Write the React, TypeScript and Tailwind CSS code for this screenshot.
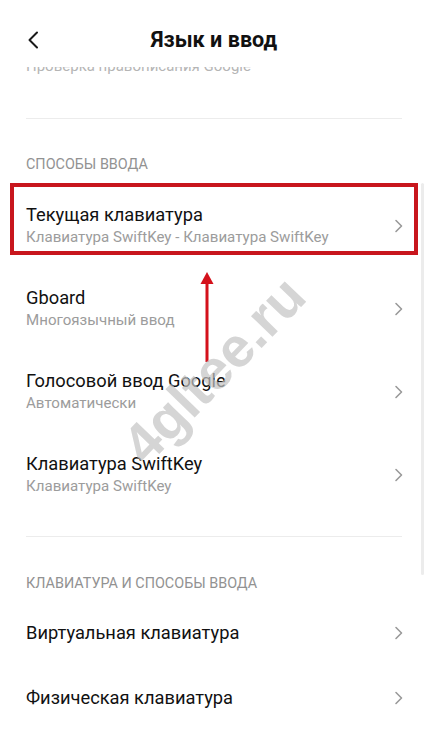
import React from "react";

const font = { fontFamily: "Roboto, 'Noto Sans', sans-serif" };

const Chevron = () => (
  <svg width="9" height="14" viewBox="0 0 9 14" fill="none" className="shrink-0">
    <path d="M2 1.5L7.5 7L2 12.5" stroke="#9a9a9a" strokeWidth="1.6" strokeLinecap="round" strokeLinejoin="round" />
  </svg>
);

interface RowProps {
  title: string;
  subtitle?: string;
}

const Row: React.FC<RowProps> = ({ title, subtitle }) => (
  <div className={`flex items-center justify-between pl-[26px] pr-[25px] ${subtitle ? "h-[83px]" : "h-[65px]"}`}>
    <div className="flex flex-col">
      <span className="text-[18.3px] leading-[22px] text-[#111111]">{title}</span>
      {subtitle && <span className="mt-[1px] text-[15.1px] leading-[20px] text-[#9c9c9c]">{subtitle}</span>}
    </div>
    <Chevron />
  </div>
);

const SectionHeader = ({ children }: { children: React.ReactNode }) => (
  <div className="px-[26px] text-[14.4px] leading-[16px] text-[#929292]">{children}</div>
);

export default function App() {
  return (
    <div className="relative w-[428px] h-[746px] overflow-hidden bg-white" style={font}>
      {/* header */}
      <div className="relative h-[67px] flex justify-center pt-[27px]">
        <svg width="12" height="18" viewBox="0 0 12 18" fill="none" className="absolute left-[27px] top-[31px]">
          <path d="M10 1.5L2.5 9L10 16.5" stroke="#1a1a1a" strokeWidth="2" strokeLinecap="round" strokeLinejoin="round" />
        </svg>
        <span className="text-[21.6px] leading-[26px] font-bold text-[#111111]">Язык и ввод</span>
      </div>

      {/* scrolled-off line */}
      <div className="h-[8px] overflow-hidden px-[26px]">
        <div className="-mt-[11px] text-[15px] leading-[20px] text-[#b5b5b5]">Проверка правописания Google</div>
      </div>

      <div className="mt-[43px] mx-[26px] h-px bg-[#ececec]" />

      <div className="pt-[38px] pb-[11px]">
        <SectionHeader>СПОСОБЫ ВВОДА</SectionHeader>
      </div>

      <div className="relative">
        <Row title="Текущая клавиатура" subtitle="Клавиатура SwiftKey - Клавиатура SwiftKey" />
        <div className="absolute left-[10px] right-[10px] top-[-1px] h-[72px] border-[4px] border-[#c8161d]" />
      </div>
      <Row title="Gboard" subtitle="Многоязычный ввод" />
      <Row title="Голосовой ввод Google" subtitle="Автоматически" />
      <Row title="Клавиатура SwiftKey" subtitle="Клавиатура SwiftKey" />

      <div className="mt-[20px] mx-[26px] h-px bg-[#ececec]" />

      <div className="pt-[39px] pb-[8px]">
        <SectionHeader>КЛАВИАТУРА И СПОСОБЫ ВВОДА</SectionHeader>
      </div>

      <Row title="Виртуальная клавиатура" />
      <Row title="Физическая клавиатура" />

      {/* scrollbar */}
      <div className="absolute left-[421px] top-[183px] w-[3px] h-[392px] bg-[#ececec] rounded-full" />

      {/* annotation arrow */}
      <svg width="16" height="94" viewBox="0 0 16 94" className="absolute left-[199px] top-[270px]">
        <path d="M8 2L14.5 14H1.5Z" fill="#d4111b" />
        <rect x="6.5" y="12" width="3" height="80" fill="#d4111b" />
      </svg>

      {/* watermark */}
      <div
        className="absolute left-[214px] top-[370px] -translate-x-1/2 -translate-y-1/2 -rotate-[46deg] text-[56px] font-bold leading-none text-[#c4c4c4] opacity-70 whitespace-nowrap select-none"
        style={{ fontFamily: "'Liberation Sans', Arial, sans-serif" }}
      >
        4gltee.ru
      </div>
    </div>
  );
}
